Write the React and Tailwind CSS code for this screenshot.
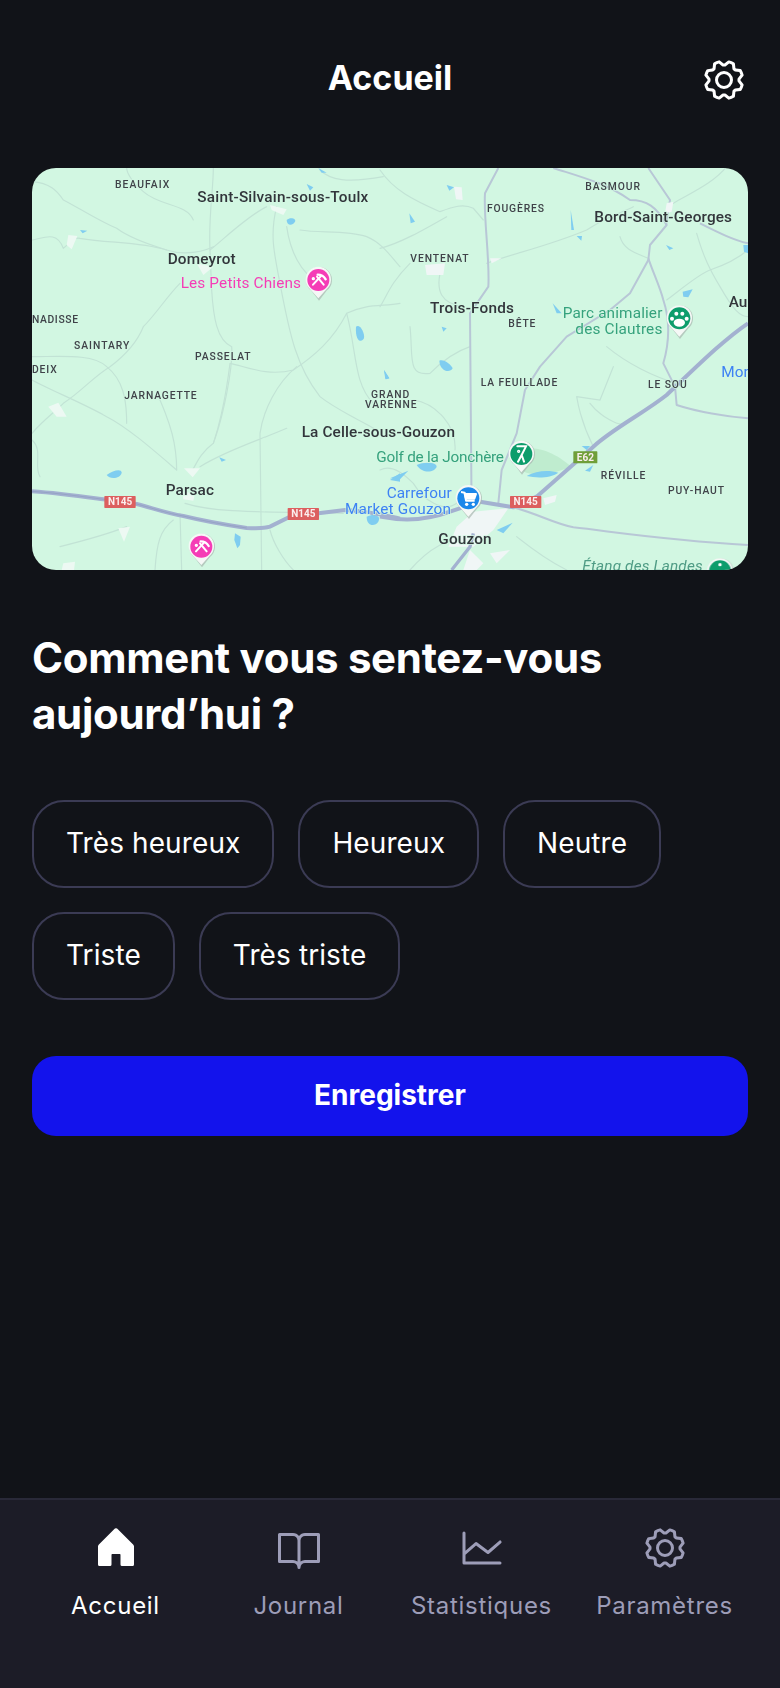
import React from "react";
import { PiGear, PiHouseFill, PiBookOpen, PiChartLine } from "react-icons/pi";

const placeCss = { fontFamily: "Roboto, sans-serif" };

const L = ({ x, y, w, s = 31, c = "#3f4349", f = 500, t, skew }) => (
  <text
    x={x}
    y={y}
    fontSize={s}
    fill={c}
    fontWeight={f}
    textLength={w}
    lengthAdjust="spacing"
    style={{ ...placeCss, paintOrder: "stroke", fontStyle: skew ? "italic" : "normal" }}
    stroke="#d2f7e2"
    strokeWidth={4}
  >
    {t}
  </text>
);

const Shield = ({ x, y, w, c, t }) => (
  <g>
    <rect x={x} y={y} width={w} height={36} fill={c} rx={2} />
    <text x={x + w / 2} y={y + 28} textAnchor="middle" fontSize={30} fontWeight={700} fill="#fbeeee" style={placeCss}>
      {t}
    </text>
  </g>
);

const Pin = ({ x, y, c, children }) => (
  <g>
    <path
      d={`M${x} ${y + 59} L${x - 24} ${y + 28} A39 39 0 1 1 ${x + 24} ${y + 28} Z`}
      fill="#a9b8b0"
      opacity="0.7"
      transform="translate(2 3)"
    />
    <path d={`M${x} ${y + 55} L${x - 25} ${y + 27} A38 38 0 1 1 ${x + 25} ${y + 27} Z`} fill="#f5f8f6" />
    <circle cx={x} cy={y} r={33} fill={c} />
    {children}
  </g>
);

const Crossed = ({ x, y }) => (
  <g stroke="#fff" strokeWidth="6" strokeLinecap="round" fill="none">
    <path d={`M${x - 16} ${y + 14} L${x + 8} ${y - 12}`} />
    <path d={`M${x + 16} ${y + 14} L${x - 4} ${y - 10}`} />
    <path d={`M${x - 2} ${y - 16} Q${x + 14} ${y - 16} ${x + 22} ${y - 2}`} strokeWidth="7" />
    <circle cx={x - 15} cy={y - 4} r="2" fill="#fff" />
  </g>
);

const roadsMinor1 = [
  "M96 95 C150 100 170 120 190 150 C230 170 300 215 350 235 C390 265 450 285 500 300 C560 320 620 300 640 290",
  "M96 270 C130 265 170 240 190 295 C210 280 220 260 240 265 C330 280 420 275 500 300",
  "M640 54 C640 120 625 200 630 300 L635 420 C640 500 650 570 695 590 C700 650 670 800 640 880 C600 910 590 940 575 965",
  "M800 170 C740 200 680 260 630 300 M830 170 C810 250 820 300 840 400 C870 560 890 650 960 740 C1010 780 1080 810 1130 840",
  "M580 210 C560 160 480 170 430 125 C400 100 380 70 380 54",
  "M96 690 C150 720 250 760 320 800 C380 830 460 900 530 960",
  "M540 400 C500 440 470 490 430 530 C410 580 370 620 330 650 C280 680 250 720 190 760 C160 790 130 810 96 850",
  "M96 620 C180 620 280 610 320 650 C370 690 380 750 380 820 M480 750 C510 820 530 880 530 960",
  "M690 640 C680 720 660 820 640 880 M690 640 C740 650 800 680 880 660 C940 620 1000 570 1040 490 C1100 460 1150 470 1200 460",
  "M890 650 C830 700 790 780 780 850 L785 1260 M600 950 C680 900 780 870 860 835",
  "M96 870 C130 900 100 950 120 980 M520 1110 C480 1140 470 1180 465 1260 M180 1190 C260 1170 330 1150 380 1130 M540 1090 L545 1260",
  "M555 1060 C650 1090 800 1085 1030 1090 M810 1140 C820 1180 850 1230 880 1260",
  "M960 60 C990 90 1040 100 1150 80 M900 240 C960 250 1040 240 1100 260 C1150 280 1180 330 1200 350 M860 230 C870 300 900 370 960 400",
  "M1040 490 C1070 600 1060 700 1120 760",
];

const roadsMedium2 = [
  "M355 54 L315 130 C310 200 330 330 325 410 L270 490 L275 1100 L280 1150",
  "M520 54 C600 80 680 100 750 150 C800 150 830 170 860 225 L810 285 L805 330 L750 430 L690 480 L560 560 L480 650 L435 720 L410 850 L365 960 L355 1060",
  "M805 54 L870 150 L858 225 M805 325 C820 370 840 410 850 450 C870 510 870 570 850 640 L885 710 L890 765 C950 785 1040 800 1104 805",
  "M960 220 C1020 250 1060 270 1104 280",
];

const roadsMinor2 = [
  "M0 60 C40 120 100 150 180 185 C220 170 250 160 280 175 L310 210 M0 295 C60 280 130 240 200 200 M90 340 C30 400 20 440 0 470",
  "M180 370 C170 420 180 460 250 470 M320 340 C400 310 500 290 620 240 C680 200 720 190 760 170 M720 260 C730 300 770 310 805 325",
  "M90 530 C100 620 80 680 150 670 C200 620 240 600 270 590 M950 250 C970 320 990 360 1020 410 C1060 480 1080 500 1104 500",
  "M860 450 C900 420 960 370 990 360 M990 360 C1050 340 1080 320 1104 300 M680 590 C740 640 820 680 890 700",
  "M590 740 C600 800 620 850 640 890 M590 740 L625 745 L660 750 L700 650 M630 760 C660 800 720 830 730 820",
  "M100 750 C170 760 230 830 225 900 M90 1260 C150 1190 200 1170 280 1150 M410 1160 C460 1200 500 1230 560 1260",
  "M0 960 C40 940 80 980 100 1000 C130 1050 190 1090 230 1060 M1040 50 C1000 100 930 130 880 160",
];

function MapArt() {
  return (
    <svg viewBox="32 168 716 402" className="block w-full h-full" preserveAspectRatio="none">
      <defs>
        <filter id="soft" x="-2%" y="-2%" width="104%" height="104%">
          <feGaussianBlur stdDeviation="0.5" />
        </filter>
      </defs>
      <rect x="32" y="168" width="716" height="402" fill="#d2f7e2" />
      <g filter="url(#soft)">
        <g transform="translate(0 150) scale(0.33333)">
          <g fill="none" stroke="#c2e3d5" strokeWidth="3.5" strokeLinecap="round">
            {roadsMinor1.map((d, i) => (
              <path key={i} d={d} />
            ))}
          </g>
          <g fill="#edf9f3">
            <path d="M205 255 L232 258 L215 298 L200 285Z" />
            <path d="M810 165 L860 178 L850 195 L815 180Z" />
            <path d="M145 770 L175 758 L200 800 L170 800Z" />
            <path d="M552 955 L600 955 L578 982Z" />
            <path d="M548 1025 L585 1030 L580 1052 L550 1048Z" />
            <path d="M355 1135 L390 1130 L372 1175Z" />
            <path d="M190 1240 L225 1235 L222 1260 L185 1260Z" />
            <path d="M590 340 L640 350 L610 375Z" />
          </g>
          <g fill="#7fcdf0">
            <path d="M320 975 C340 960 365 955 365 968 C362 985 330 990 320 975Z" />
            <path d="M860 210 C870 200 890 205 885 215 C878 228 860 228 860 210Z" />
            <path d="M1068 530 C1080 520 1095 550 1092 565 C1085 580 1065 575 1068 530Z" />
            <path d="M1100 1100 C1120 1090 1145 1095 1135 1115 C1125 1130 1100 1130 1100 1100Z" />
            <path d="M705 1150 L722 1160 L720 1185 L712 1195 L703 1170Z" />
            <path d="M658 922 L678 930 L665 935Z" />
            <path d="M955 54 L980 68 L965 68Z" />
            <path d="M920 102 L940 112 L930 122Z" />
            <path d="M1152 660 L1168 685 L1158 688Z" />
            <path d="M240 240 L262 242 L248 250Z" />
            <path d="M1170 990 L1200 970 L1200 995Z" />
          </g>
          <path
            d="M96 1024 C180 1030 250 1040 310 1048 L410 1062 C460 1075 500 1090 550 1098 C620 1115 680 1125 740 1134 C770 1136 790 1136 810 1130 L870 1100 L1035 1080 C1100 1082 1150 1095 1200 1106"
            fill="none"
            stroke="#a3b1d0"
            strokeWidth="12"
          />
          <path d="M96 1024 C180 1030 250 1040 310 1048 L410 1062 C460 1075 500 1090 550 1098 C620 1115 680 1125 740 1134" fill="none" stroke="#8e9cc0" strokeWidth="2" />
          <Shield x={313} y={1038} w={94} c="#dc5f5f" t="N145" />
          <Shield x={863} y={1074} w={94} c="#dc5f5f" t="N145" />
        </g>
        <g transform="translate(380 150) scale(0.33333)">
          <g fill="none" stroke="#c2e3d5" strokeWidth="3.5" strokeLinecap="round">
            {roadsMinor2.map((d, i) => (
              <path key={i} d={d} />
            ))}
          </g>
          <g fill="none" stroke="#b8c7d6" strokeWidth="6" strokeLinejoin="round">
            {roadsMedium2.map((d, i) => (
              <path key={i} d={d} />
            ))}
          </g>
          <path d="M440 895 C500 890 550 930 575 950 L530 965 C480 975 440 975 425 960Z" fill="#bfeccf" />
          <g fill="#f0f6f6">
            <path d="M135 345 L195 340 L190 375 L140 375Z" />
            <path d="M222 110 L245 112 L248 150 L228 148Z" />
            <path d="M330 325 L365 325 L335 340Z" />
            <path d="M490 1045 L530 1035 L525 1055 L495 1065Z" />
            <path d="M280 1085 L385 1075 L340 1140 L280 1190 L205 1190 L230 1130Z" />
            <path d="M860 160 L880 155 L875 185 L855 190Z" />
            <path d="M330 1210 L390 1200 L350 1240Z" />
            <path d="M270 1200 L310 1240 L290 1260 L250 1260Z" />
          </g>
          <g fill="#7fcdf0">
            <path d="M178 632 C190 625 215 645 218 655 C210 670 180 665 178 632Z" />
            <path d="M908 425 L938 418 L925 442 L910 440Z" />
            <path d="M200 105 L222 112 L208 122Z" />
            <path d="M88 190 L105 215 L92 220Z" />
            <path d="M590 258 L606 258 L604 272Z" />
            <path d="M1090 285 L1104 285 L1104 310 L1092 305Z" />
            <path d="M858 285 L880 295 L868 300Z" />
            <path d="M518 460 L545 490 L530 490Z" />
            <path d="M110 945 C130 935 170 935 170 950 C165 965 130 975 110 945Z" />
            <path d="M30 985 L85 962 L60 988Z" />
            <path d="M440 978 C470 960 510 960 535 968 C510 985 470 985 440 978Z" />
            <path d="M605 888 L630 888 L620 900Z" />
            <path d="M615 962 L640 945 L630 965Z" />
            <path d="M350 1140 L398 1118 L370 1150Z" />
            <path d="M572 180 L582 240 L574 240Z" />
            <path d="M12 660 L28 685 L16 688Z" />
            <path d="M185 530 L200 535 L190 545Z" />
          </g>
          <path
            d="M0 1100 C60 1112 130 1115 210 1085 L300 1055 L400 1072 L470 1040 L640 890 C700 835 790 790 860 735 C950 650 1030 570 1104 520"
            fill="none"
            stroke="#a3b1d0"
            strokeWidth="12"
            strokeLinejoin="round"
          />
          <path d="M400 1072 C470 1090 520 1120 580 1132 C700 1145 850 1170 1104 1185" fill="none" stroke="#b8c7d6" strokeWidth="6" />
          <path d="M280 1150 L270 1190 L215 1260" fill="none" stroke="#a3b1d0" strokeWidth="10" />
          <Shield x={390} y={1038} w={94} c="#dc5f5f" t="N145" />
          <Shield x={580} y={904} w={72} c="#6f9f38" t="E62" />
          <L x={616} y={120} w={164} t="BASMOUR" />
          <L x={321} y={186} w={171} t="FOUGÈRES" />
          <L x={643} y={215} w={413} s={46} c="#32363b" t="Bord-Saint-Georges" />
          <L x={91} y={337} w={175} t="VENTENAT" />
          <L x={150} y={488} w={252} s={46} c="#32363b" t="Trois-Fonds" />
          <L x={385} y={530} w={81} t="BÊTE" />
          <L x={548} y={505} w={299} s={46} c="#36a27d" f={400} t="Parc animalier" />
          <L x={586} y={553} w={261} s={46} c="#36a27d" f={400} t="des Clautres" />
          <L x={1046} y={472} s={46} c="#32363b" t="Au" />
          <L x={1024} y={682} s={46} c="#3e82f4" f={400} t="Mon" />
          <L x={302} y={709} w={230} t="LA FEUILLADE" />
          <L x={804} y={715} w={116} t="LE SOU" />
          <L x={662} y={988} w={134} t="RÉVILLE" />
          <L x={864} y={1033} w={168} t="PUY-HAUT" />
          <L x={-11} y={935} w={383} s={46} c="#36a27d" f={400} t="Golf de la Jonchère" />
          <L x={20} y={1045} w={195} s={46} c="#3e82f4" f={400} t="Carrefour" />
          <L x={-105} y={1092} w={318} s={46} c="#3e82f4" f={400} t="Market Gouzon" />
          <L x={175} y={1182} w={160} s={46} c="#32363b" t="Gouzon" />
          <L x={607} y={1262} w={361} s={46} c="#4f9c85" f={400} t="Étang des Landes" skew />
          <Pin x={898} y={505} c="#0f9d6c">
            <g fill="#fff">
              <ellipse cx={898} cy={518} rx={17} ry={12} />
              <circle cx={876} cy={506} r={6} />
              <circle cx={889} cy={491} r={6} />
              <circle cx={907} cy={491} r={6} />
              <circle cx={920} cy={506} r={6} />
            </g>
          </Pin>
          <Pin x={424} y={912} c="#0f9d6c">
            <g stroke="#fff" strokeWidth="6" fill="none" strokeLinecap="round">
              <path d="M412 889 L438 889 L425 915 L414 935 M425 915 L432 935" />
              <circle cx={416} cy={904} r={2} />
            </g>
          </Pin>
          <Pin x={265} y={1045} c="#1a87ea">
            <g fill="none" stroke="#fff" strokeWidth="6" strokeLinejoin="round">
              <path d="M243 1026 L254 1028 L258 1052 L284 1052" />
              <path d="M254 1032 L288 1032 L283 1046 L258 1046Z" fill="#fff" />
            </g>
            <circle cx={260} cy={1063} r={5} fill="#fff" />
            <circle cx={280} cy={1063} r={5} fill="#fff" />
          </Pin>
          <Pin x={1020} y={1264} c="#0f9d6c">
            <circle cx={1020} cy={1244} r={5} fill="#fff" />
          </Pin>
        </g>
        <g transform="translate(0 150) scale(0.33333)">
          <L x={345} y={115} w={163} t="BEAUFAIX" />
          <L x={592} y={155} w={513} s={46} c="#32363b" t="Saint-Silvain-sous-Toulx" />
          <L x={503} y={343} w={204} s={46} c="#32363b" t="Domeyrot" />
          <L x={542} y={415} w={361} s={46} c="#f53db6" f={400} t="Les Petits Chiens" />
          <L x={96} y={520} w={138} t="NADISSE" />
          <L x={222} y={598} w={166} t="SAINTARY" />
          <L x={96} y={668} w={74} t="DEIX" />
          <L x={585} y={630} w={167} t="PASSELAT" />
          <L x={373} y={746} w={217} t="JARNAGETTE" />
          <L x={1113} y={745} w={115} t="GRAND" />
          <L x={1095} y={775} w={155} t="VARENNE" />
          <L x={905} y={860} w={460} s={46} c="#32363b" t="La Celle-sous-Gouzon" />
          <L x={497} y={1035} w={145} s={46} c="#32363b" t="Parsac" />
          <Pin x={955} y={390} c="#f53db6">
            <Crossed x={955} y={390} />
          </Pin>
          <Pin x={604} y={1190} c="#f53db6">
            <Crossed x={604} y={1190} />
          </Pin>
        </g>
      </g>
    </svg>
  );
}

const moods = ["Très heureux", "Heureux", "Neutre", "Triste", "Très triste"];
const nav = [
  ["Accueil", PiHouseFill, true],
  ["Journal", PiBookOpen, false],
  ["Statistiques", PiChartLine, false],
  ["Paramètres", PiGear, false],
];

export default function App() {
  return (
    <div className="flex h-[1688px] w-[780px] flex-col justify-between bg-[#111318] text-white font-['Inter',sans-serif]">
      <main>
        <header className="grid grid-cols-[1fr_auto_1fr] items-center px-8 pt-14 pb-16">
          <span />
          <h1 className="text-[34px] font-bold leading-[48px] -mt-1">Accueil</h1>
          <PiGear className="size-12 justify-self-end" />
        </header>
        <div className="mx-8 h-[402px] overflow-hidden rounded-[24px]">
          <MapArt />
        </div>
        <h2 className="mx-8 mt-[60px] text-[42px] font-bold leading-[56px] tracking-[-0.3px]">Comment vous sentez-vous aujourd’hui ?</h2>
        <div className="mx-8 mt-[58px] flex flex-wrap gap-x-6 gap-y-6">
          {moods.map((m) => (
            <button key={m} className="h-[88px] rounded-[32px] border-2 border-[#3b3b54] px-8 pb-0.5 text-[28px] font-normal leading-none tracking-[0.1px]">
              {m}
            </button>
          ))}
        </div>
        <button className="mx-8 mt-[56px] block h-20 w-[716px] rounded-[24px] bg-[#1313ec] pb-0.5 text-[28px] font-bold">Enregistrer</button>
      </main>
      <nav className="grid h-[190px] grid-cols-4 border-t-2 border-[#292938] bg-[#1c1c27] px-6 pt-6">
        {nav.map(([label, Icon, active]) => (
          <div key={label} className={`flex flex-col items-center ${active ? "text-white" : "text-[#9d9db8]"}`}>
            <Icon className="size-12" />
            <span className="mt-[18px] text-[24px] font-normal leading-8 tracking-[0.03em]">{label}</span>
          </div>
        ))}
      </nav>
    </div>
  );
}
